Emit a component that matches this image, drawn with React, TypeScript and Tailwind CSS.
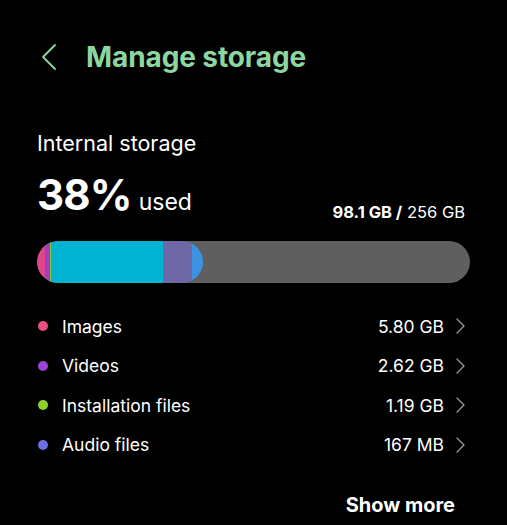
import React from "react";

const rows = [
  { name: "Images", value: "5.80 GB", color: "#e9507f" },
  { name: "Videos", value: "2.62 GB", color: "#9b45d6" },
  { name: "Installation files", value: "1.19 GB", color: "#8fd12c" },
  { name: "Audio files", value: "167 MB", color: "#6b72e6" },
];

function Chevron({ className }: { className?: string }) {
  return (
    <svg width="9" height="16" viewBox="0 0 9 16" className={className} fill="none">
      <path d="M1 1l7 7-7 7" stroke="#9a9a9a" strokeWidth="1.3" strokeLinecap="round" strokeLinejoin="round" />
    </svg>
  );
}

export default function App() {
  return (
    <div
      className="w-[507px] h-[525px] bg-black text-white overflow-hidden flex flex-col"
      style={{ fontFamily: "Inter, Roboto, 'Noto Sans', sans-serif" }}
    >
      <div className="flex items-center pl-[41px] pt-[41px] h-[73px]">
        <svg width="16" height="28" viewBox="0 0 16 28" fill="none">
          <path d="M14 2L2 14l12 12" stroke="#8ed6a0" strokeWidth="1.8" strokeLinecap="round" strokeLinejoin="round" />
        </svg>
        <div className="ml-[29px] text-[28px] font-bold text-[#8ed6a0] tracking-[-0.1px] leading-none">Manage storage</div>
      </div>
      <div className="pl-[37px] pr-[37px] mt-[60px]">
        <div className="text-[21.5px] leading-none">Internal storage</div>
        <div className="flex items-end justify-between mt-[19px]">
          <div className="flex items-baseline">
            <span className="text-[42px] font-bold leading-none tracking-[-0.8px]">38%</span>
            <span className="text-[23px] ml-[7px] leading-none">used</span>
          </div>
          <div className="text-[16.5px] leading-none mb-[-5px] mr-[5px]">
            <span className="font-bold">98.1 GB /</span> <span>256 GB</span>
          </div>
        </div>
        <div className="mt-[25px] h-[42px] w-[433px] rounded-full bg-[#5f5f5f] overflow-hidden flex">
          <div className="h-full w-[166px] rounded-full overflow-hidden flex">
            <div className="h-full w-[8px] bg-[#e0468a]" />
            <div className="h-full w-[5px] bg-[#a040c0]" />
            <div className="h-full w-[1px] bg-[#86c63a]" />
            <div className="h-full w-[112px] bg-[#00b4d1]" />
            <div className="h-full w-[29px] bg-[#6e68a6]" />
            <div className="h-full flex-1 bg-[#3b93e2]" />
          </div>
        </div>
        <div className="mt-[24px] flex flex-col">
          {rows.map((r) => (
            <div key={r.name} className="h-[39.5px] flex items-center">
              <div className="w-[10px] h-[10px] rounded-full ml-[1px]" style={{ backgroundColor: r.color }} />
              <div className="ml-[14px] text-[17.5px] leading-none flex-1">{r.name}</div>
              <div className="text-[17.5px] leading-none">{r.value}</div>
              <Chevron className="ml-[12px] mr-[5px]" />
            </div>
          ))}
        </div>
        <div className="flex justify-end mt-[30px] pr-[15px]">
          <div className="text-[20px] font-bold leading-none">Show more</div>
        </div>
      </div>
    </div>
  );
}
